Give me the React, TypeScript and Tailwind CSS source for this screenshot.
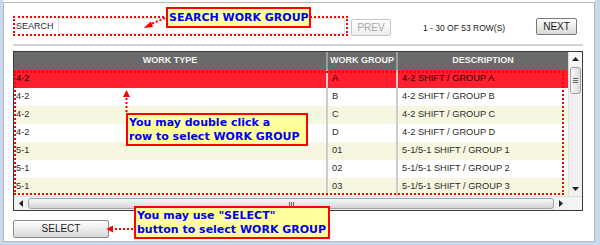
import React from 'react';

interface Row {
  type: string;
  group: string;
  desc: string;
}

const rows: Row[] = [
  { type: '4-2', group: 'A', desc: '4-2 SHIFT / GROUP A' },
  { type: '4-2', group: 'B', desc: '4-2 SHIFT / GROUP B' },
  { type: '4-2', group: 'C', desc: '4-2 SHIFT / GROUP C' },
  { type: '4-2', group: 'D', desc: '4-2 SHIFT / GROUP D' },
  { type: '5-1', group: '01', desc: '5-1/5-1 SHIFT / GROUP 1' },
  { type: '5-1', group: '02', desc: '5-1/5-1 SHIFT / GROUP 2' },
  { type: '5-1', group: '03', desc: '5-1/5-1 SHIFT / GROUP 3' },
];

function rowBg(i: number) {
  if (i === 0) return 'bg-[#ff1f2e] text-[#1a0000]';
  return i % 2 === 0 ? 'bg-[#f6f6e1] text-[#2a2a2a]' : 'bg-white text-[#2a2a2a]';
}

function Tri({ dir }: { dir: 'up' | 'down' | 'left' | 'right' }) {
  const pts = {
    up: '0,4 3.5,0 7,4',
    down: '0,0 3.5,4 7,0',
    left: '4,0 0,3.5 4,7',
    right: '0,0 4,3.5 0,7',
  }[dir];
  const vertical = dir === 'up' || dir === 'down';
  return (
    <svg width={vertical ? 7 : 4} height={vertical ? 4 : 7} viewBox={vertical ? '0 0 7 4' : '0 0 4 7'}>
      <polygon points={pts} fill="#202020" />
    </svg>
  );
}

function Callout({ className, children }: { className: string; children: React.ReactNode }) {
  return (
    <div
      className={`absolute border-2 border-[#ff0000] bg-[#ffffa0] text-[11px] font-bold text-[#0000f0] font-['DejaVu_Sans',Verdana,sans-serif] ${className}`}
    >
      {children}
    </div>
  );
}

export default function App() {
  return (
    <div className="relative w-[600px] h-[245px] overflow-hidden bg-[#c6d9ee] pl-[3px] pr-[5px] font-['Liberation_Sans',Arial,sans-serif]">
      <div className="h-[2px] bg-[#fbfbfb]" />
      <div className="h-[240px] border border-[#b9b9b9] bg-white pl-[9px] pr-[11px] pt-[13px]">
        {/* search bar */}
        <div className="flex items-start h-[20px]">
          <div className="flex items-center w-[335px] h-[20px] border-2 border-dotted border-[#ff0000] pl-[1px] pr-[1px]">
            <span className="text-[9px] leading-none text-[#2a2a2a] mr-[4px]">SEARCH</span>
            <input className="flex-1 min-w-0 h-[16px] border border-[#e2e2e2] bg-white outline-none" />
          </div>
          <button
            disabled
            className="mt-[3px] ml-[3px] w-[40px] h-[17px] rounded-[2px] border border-[#c4c4c4] bg-gradient-to-b from-white to-[#ececec] text-[10px] leading-none text-[#a8a8a8]"
          >
            PREV
          </button>
          <span className="mt-[7px] ml-[32px] text-[8.5px] leading-[11px] text-[#222]">1 - 30 OF 53 ROW(S)</span>
          <button className="mt-[2px] ml-auto mr-[6px] w-[41px] h-[17px] rounded-[2px] border border-[#7a7a7a] bg-gradient-to-b from-white to-[#d9d9d9] text-[10px] leading-none text-[#1a1a1a]">
            NEXT
          </button>
        </div>

        <div className="mt-[8px] h-[2px] bg-[#d2d2d2]" />

        {/* grid */}
        <div className="mt-[5px] border border-[#3a3a3a]">
          <div className="flex">
            <div className="w-[554px]">
              <div className="flex h-[18px] bg-[#6a6a6a] text-[9px] font-bold text-[#f4f4f4]">
                <div className="w-[314px] border-r-2 border-[#9c9c9c] flex items-center justify-center">WORK TYPE</div>
                <div className="w-[70px] border-r-2 border-[#9c9c9c] flex items-center justify-center">WORK GROUP</div>
                <div className="w-[170px] flex items-center justify-center">DESCRIPTION</div>
              </div>
              {rows.map((r, i) => (
                <div key={i} className={`flex h-[18px] text-[9.25px] ${rowBg(i)}`}>
                  <div className="w-[314px] border-r-2 border-[#cdcdcd] flex items-center pl-[2px]">{r.type}</div>
                  <div className="w-[70px] border-r-2 border-[#cdcdcd] flex items-center pl-[4px]">{r.group}</div>
                  <div className="w-[170px] flex items-center pl-[4px]">{r.desc}</div>
                </div>
              ))}
            </div>
            {/* vertical scrollbar */}
            <div className="w-[14px] flex flex-col bg-[#f1f1f1] border-l border-[#dedede]">
              <div className="h-[14px] flex items-center justify-center bg-[#f6f6f6]">
                <Tri dir="up" />
              </div>
              <div className="flex-1 px-[1px] pt-[1px]">
                <div className="h-[27px] rounded-[3px] border border-[#a3a3a3] bg-gradient-to-r from-[#f7f7f7] to-[#dcdcdc] flex flex-col items-center justify-center gap-[1px]">
                  <div className="w-[5px] h-px bg-[#666]" />
                  <div className="w-[5px] h-px bg-[#666]" />
                  <div className="w-[5px] h-px bg-[#666]" />
                </div>
              </div>
              <div className="h-[14px] flex items-center justify-center">
                <Tri dir="down" />
              </div>
            </div>
          </div>
          {/* horizontal scrollbar */}
          <div className="flex h-[14px] bg-[#f1f1f1] border-t border-[#dedede]">
            <div className="w-[14px] flex items-center justify-center">
              <Tri dir="left" />
            </div>
            <div className="w-[526px] py-[1px]">
              <div className="h-full rounded-[3px] border border-[#a3a3a3] bg-gradient-to-b from-[#f7f7f7] to-[#d6d6d6] flex items-center justify-center gap-[1px]">
                <div className="w-px h-[4px] bg-[#666]" />
                <div className="w-px h-[4px] bg-[#666]" />
                <div className="w-px h-[4px] bg-[#666]" />
              </div>
            </div>
            <div className="w-[14px] flex items-center justify-center">
              <Tri dir="right" />
            </div>
            <div className="w-[14px] bg-[#f4f4f4]" />
          </div>
        </div>

        <button className="mt-[9px] w-[96px] h-[18px] rounded-[2px] border border-[#8a8a8a] bg-gradient-to-b from-white to-[#d9d9d9] text-[10px] leading-none text-[#1a1a1a]">
          SELECT
        </button>
      </div>

      {/* annotations */}
      <div className="absolute left-[14px] top-[71px] w-[550px] h-[124px] border-2 border-dotted border-[#ff0000] pointer-events-none" />

      <svg className="absolute left-0 top-0 pointer-events-none" width="600" height="245">
        <g stroke="#ff0000" strokeWidth="2" strokeDasharray="2 2" fill="none">
          <line x1="165" y1="18" x2="150" y2="24.5" />
          <line x1="126.5" y1="112" x2="126.5" y2="96" />
          <line x1="133" y1="229" x2="112" y2="229" />
        </g>
        <g fill="#ff0000">
          <polygon points="143.5,28 151,21.5 153,27" />
          <polygon points="126.5,90 123,97 130,97" />
          <polygon points="106.5,229 113,225.5 113,232.5" />
        </g>
      </svg>

      <Callout className="left-[166px] top-[7px] w-[145px] h-[21px] pl-[1px] leading-[17px]">SEARCH WORK GROUP</Callout>
      <Callout className="left-[126px] top-[113px] w-[182px] h-[33px] pl-[1px] pt-[1px] leading-[14px]">
        You may double click a
        <br />
        row to select WORK GROUP
      </Callout>
      <Callout className="left-[134px] top-[206px] w-[196px] h-[33px] pl-[1px] pt-[1px] leading-[14px]">
        You may use "SELECT"
        <br />
        button to select WORK GROUP
      </Callout>
    </div>
  );
}
